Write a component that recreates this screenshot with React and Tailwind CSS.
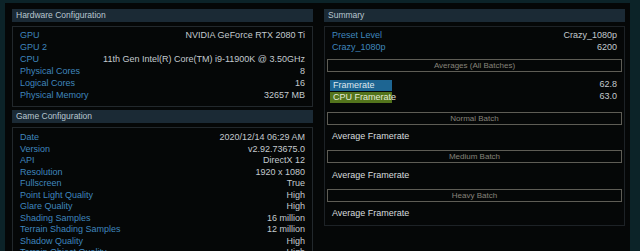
import React from 'react';

const hardware = [
  ['GPU', 'NVIDIA GeForce RTX 2080 Ti'],
  ['GPU 2', ''],
  ['CPU', '11th Gen Intel(R) Core(TM) i9-11900K @ 3.50GHz'],
  ['Physical Cores', '8'],
  ['Logical Cores', '16'],
  ['Physical Memory', '32657 MB'],
];

const game = [
  ['Date', '2020/12/14 06:29 AM'],
  ['Version', 'v2.92.73675.0'],
  ['API', 'DirectX 12'],
  ['Resolution', '1920 x 1080'],
  ['Fullscreen', 'True'],
  ['Point Light Quality', 'High'],
  ['Glare Quality', 'High'],
  ['Shading Samples', '16 million'],
  ['Terrain Shading Samples', '12 million'],
  ['Shadow Quality', 'High'],
  ['Terrain Object Quality', 'High'],
];

function Header({ title }) {
  return (
    <div className="h-[13px] bg-[#1b2a35] pl-[4px] text-[8.5px] leading-[13px] text-[#b9c7d0]">
      {title}
    </div>
  );
}

function Row({ label, value, tall }) {
  return (
    <div className={`flex items-center justify-between ${tall ? 'h-[12px] leading-[12px]' : 'h-[11.55px] leading-[11.55px]'}`}>
      <span className="text-[#3f86bd]">{label}</span>
      <span className="text-[#c3cace]">{value}</span>
    </div>
  );
}

function BatchBox({ title }) {
  return (
    <div className="mx-[2px] h-[13px] border border-[#5e5d55] text-center text-[8px] leading-[11px] text-[#85837a]">
      {title}
    </div>
  );
}

export default function App() {
  return (
    <div className="h-[251px] w-[640px] overflow-hidden bg-[#0c2328] pl-[5px] pt-[3px] pr-[10px] font-['Liberation_Sans',sans-serif] text-[9px]">
      <div className="flex h-full gap-[11px] bg-[#050707] pl-[7px] pr-[3px] pt-[6px]">
        {/* left column */}
        <div className="flex w-[301px] flex-col">
          <Header title="Hardware Configuration" />
          <div className="mt-[4px] border border-[#22282c] px-[7px] pb-[5px] pt-[2px]">
            {hardware.map(([l, v]) => (
              <Row key={l} label={l} value={v} tall />
            ))}
          </div>
          <div className="mt-[3px]">
            <Header title="Game Configuration" />
          </div>
          <div className="mt-[4px] border border-[#22282c] px-[7px] pt-[4px]">
            {game.map(([l, v]) => (
              <Row key={l} label={l} value={v} />
            ))}
          </div>
        </div>

        {/* right column */}
        <div className="flex w-[301px] flex-col">
          <Header title="Summary" />
          <div className="mt-[4px] flex h-[200px] flex-col border border-[#1d2226] pt-[2px]">
            <div className="px-[7px]">
              <Row label="Preset Level" value="Crazy_1080p" tall />
              <Row label="Crazy_1080p" value="6200" tall />
            </div>
            <div className="mt-[6px]">
              <BatchBox title="Averages (All Batches)" />
            </div>
            <div className="mt-[7px] pl-[5px] pr-[7px] text-[#c3cace]">
              <div className="flex h-[12px] items-center justify-between">
                <span className="w-[62px] whitespace-nowrap bg-[#1d6592] pl-[3px] leading-[11px] text-[#dfe8ee]">Framerate</span>
                <span>62.8</span>
              </div>
              <div className="flex h-[12px] items-center justify-between">
                <span className="w-[62px] whitespace-nowrap bg-[#53741c] pl-[3px] leading-[11px] text-[#e6ecd8]">CPU Framerate</span>
                <span>63.0</span>
              </div>
            </div>
            <div className="mt-[9px]">
              <BatchBox title="Normal Batch" />
            </div>
            <div className="h-[25px] pl-[7px] leading-[23px] text-[#d8dcde]">Average Framerate</div>
            <BatchBox title="Medium Batch" />
            <div className="h-[26px] pl-[7px] leading-[24px] text-[#d8dcde]">Average Framerate</div>
            <BatchBox title="Heavy Batch" />
            <div className="h-[22px] pl-[7px] leading-[22px] text-[#d8dcde]">Average Framerate</div>
          </div>
        </div>
      </div>
    </div>
  );
}
